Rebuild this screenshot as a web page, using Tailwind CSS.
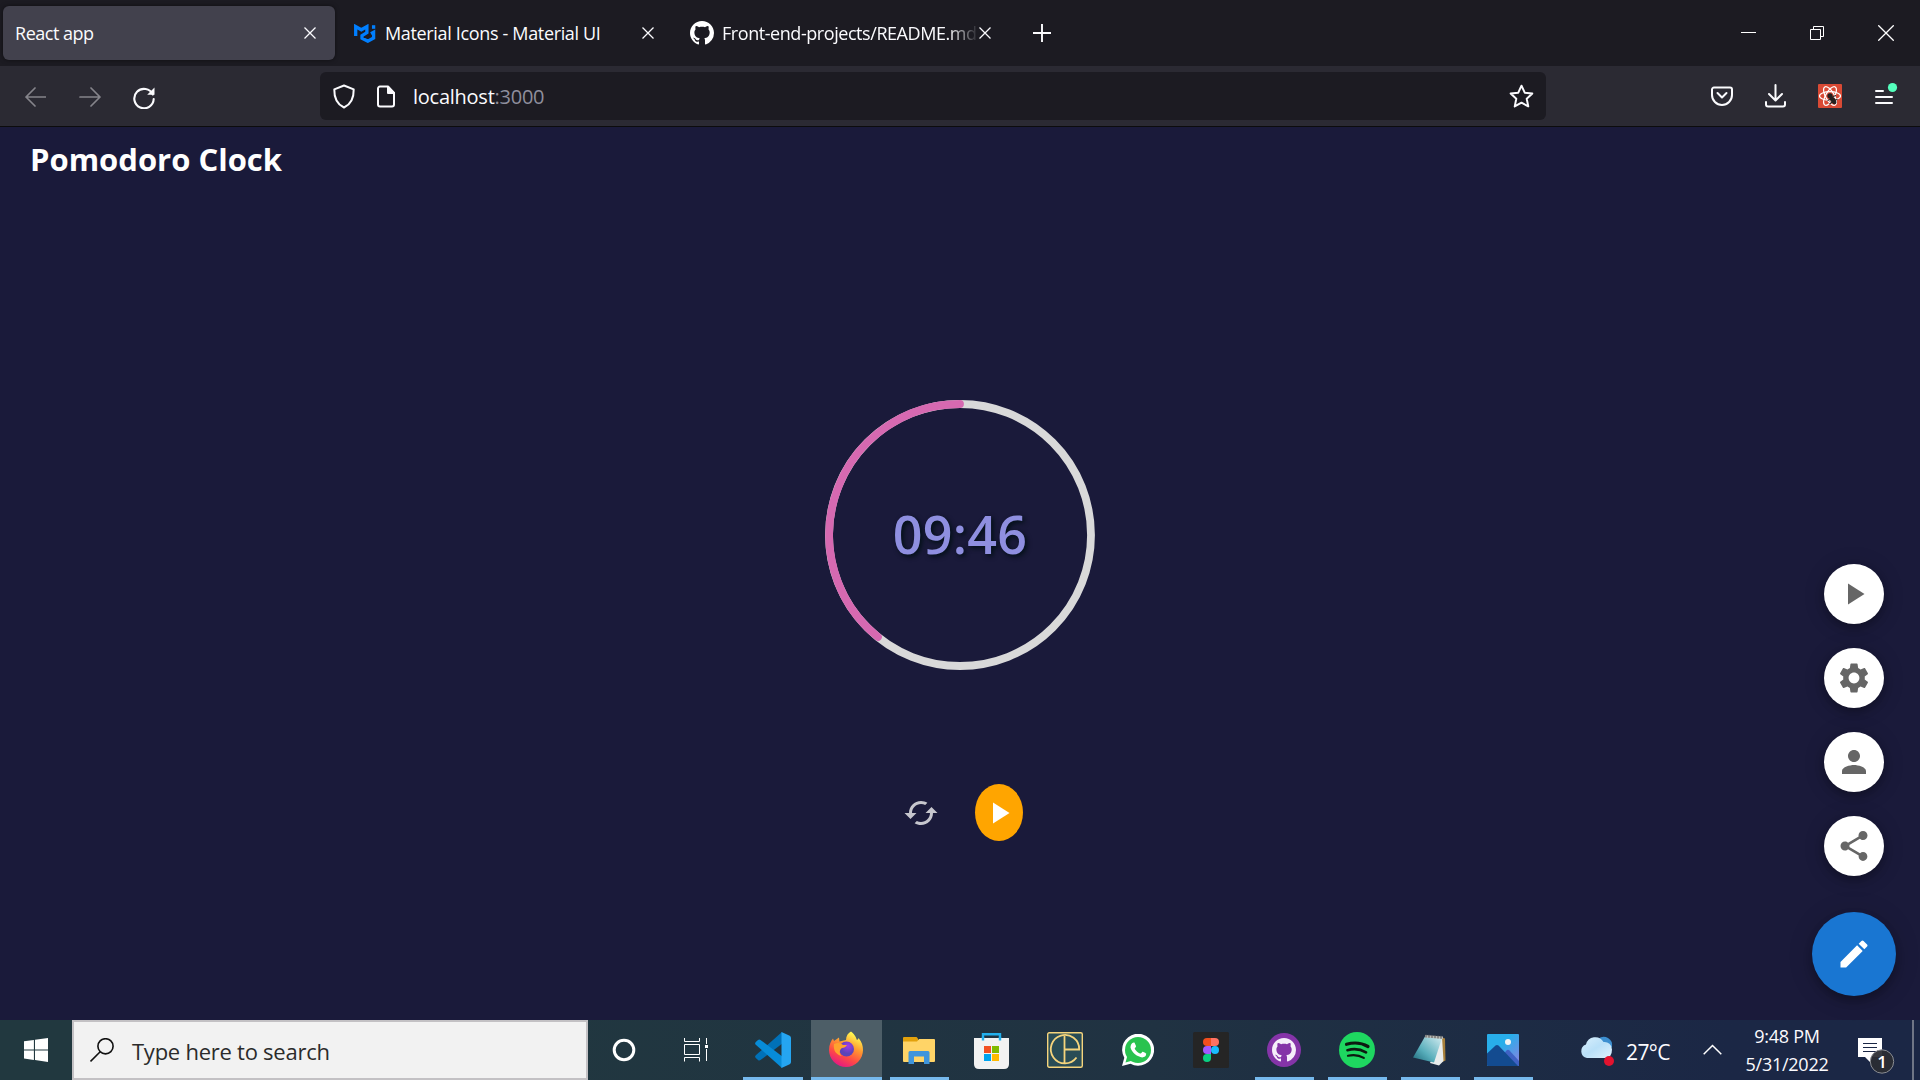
<!DOCTYPE html>
<html lang="en">
<head>
<meta charset="utf-8">
<title>Pomodoro Clock</title>
<script src="https://cdn.jsdelivr.net/npm/@tailwindcss/browser@4"></script>
</head>
<body class="flex h-[1080px] w-[1920px] flex-col overflow-hidden bg-[#1a1a3a] font-['Open_Sans',sans-serif] text-[#fbfbfe]">

<!-- Tab strip -->
<header class="flex h-[66px] shrink-0 items-center bg-[#1c1b22] pl-[3px] text-[18px] leading-6 tracking-[-0.34px]">
  <div class="flex h-[54px] w-[332px] items-center justify-between rounded-[6px] bg-[#42414d] pr-[19px] pl-3 shadow-[0_0_4px_rgba(0,0,0,0.5)]">
    <span class="tracking-[-0.48px]">React app</span>
    <svg class="size-3" viewBox="0 0 12 12" fill="none" stroke="currentColor" stroke-width="1.3"><path d="M.5.5l11 11M11.5.5l-11 11"/></svg>
  </div>
  <div class="ml-[5px] flex h-[54px] w-[332px] items-center pr-[18px] pl-[14px]">
    <svg class="h-[19px] w-[22px]" viewBox="0 0 22 19" fill="none" stroke="#007fff" stroke-width="3.3" stroke-linejoin="miter"><path d="M1.7 12V2.6l5.6 3.2 5.6-3.2v6L8 11.6v2.6l5.8 3 5.8-3.2V8.2l-2.7 1.4"/><path d="M19.6 1.2v3.6"/></svg>
    <span class="ml-[9px] grow whitespace-nowrap">Material Icons - Material UI</span>
    <svg class="size-3" viewBox="0 0 12 12" fill="none" stroke="currentColor" stroke-width="1.3"><path d="M.5.5l11 11M11.5.5l-11 11"/></svg>
  </div>
  <div class="ml-[5px] flex h-[54px] w-[333px] items-center pr-[17px] pl-[13px]">
    <svg class="size-6 shrink-0" viewBox="0 0 16 16" fill="#fff"><path d="M8 0C3.58 0 0 3.58 0 8c0 3.54 2.29 6.53 5.47 7.59.4.07.55-.17.55-.38 0-.19-.01-.82-.01-1.49-2.01.37-2.53-.49-2.69-.94-.09-.23-.48-.94-.82-1.13-.28-.15-.68-.52-.01-.53.63-.01 1.08.58 1.23.82.72 1.21 1.87.87 2.33.66.07-.52.28-.87.51-1.07-1.78-.2-3.64-.89-3.64-3.95 0-.87.31-1.59.82-2.15-.08-.2-.36-1.02.08-2.12 0 0 .67-.21 2.2.82.64-.18 1.32-.27 2-.27s1.36.09 2 .27c1.53-1.04 2.2-.82 2.2-.82.44 1.1.16 1.92.08 2.12.51.56.82 1.27.82 2.15 0 3.07-1.87 3.75-3.65 3.95.29.25.54.73.54 1.48 0 1.07-.01 1.93-.01 2.2 0 .21.15.46.55.38A8.01 8.01 0 0 0 16 8c0-4.42-3.58-8-8-8z"/></svg>
    <span class="ml-2 w-[257px] shrink-0 overflow-hidden mask-r-from-88% mask-r-to-100% whitespace-nowrap tracking-[-0.44px]">Front-end-projects/README.md</span>
    <svg class="size-3 shrink-0" viewBox="0 0 12 12" fill="none" stroke="currentColor" stroke-width="1.3"><path d="M.5.5l11 11M11.5.5l-11 11"/></svg>
  </div>
  <svg class="ml-[23px] size-[18px]" viewBox="0 0 18 18" fill="none" stroke="currentColor" stroke-width="1.9"><path d="M9 0v18M0 9h18"/></svg>
  <div class="ml-auto flex items-center pr-[26px]">
    <svg class="h-[18px] w-[15px]" viewBox="0 0 15 18" fill="#fff"><path d="M0 8h15v1H0z"/></svg>
    <svg class="ml-[54px] size-[14px]" viewBox="0 0 14 14" fill="none" stroke="#fff"><path d="M.5 3.5h10v10H.5zM3.5 3.500V.5h10v10h-3"/></svg>
    <svg class="ml-[54px] size-4" viewBox="0 0 16 16" fill="none" stroke="#fff" stroke-width="1.3"><path d="M.3.3l15.400 15.400M15.700.3L.3 15.700"/></svg>
  </div>
</header>

<!-- Navigation bar -->
<nav class="flex h-[61px] shrink-0 items-center border-b border-[#0c0c0d] bg-[#2b2a33]">
  <svg class="mt-0.5 ml-6 size-[22px] text-[#85848b]" viewBox="0 0 22 22" fill="none" stroke="currentColor" stroke-width="1.7" stroke-linecap="round" stroke-linejoin="round"><path d="M22 11H2M11 2l-9 9 9 9"/></svg>
  <svg class="mt-0.5 ml-[33px] size-[22px] text-[#85848b]" viewBox="0 0 22 22" fill="none" stroke="currentColor" stroke-width="1.7" stroke-linecap="round" stroke-linejoin="round"><path d="M1 11h20M12 2l9 9-9 9"/></svg>
  <svg class="mt-px ml-[31px] size-6" viewBox="0 0 24 24" fill="none" stroke="currentColor" stroke-width="2.1" stroke-linecap="round"><path d="M20.800 9.500A9.700 9.700 0 1 0 21.700 14"/><path d="M22.500 2.500v7.300h-7.300z" fill="currentColor" stroke="none"/></svg>
  <div class="ml-[164px] flex h-12 w-[1226px] items-center rounded-[6px] bg-[#1c1b22] pr-[12px] pl-3">
    <svg class="h-[25px] w-6" viewBox="0 0 24 25" fill="none" stroke="currentColor" stroke-width="2" stroke-linejoin="round"><path d="M12 1.500l9.700 3.900c.2 8.600-2.200 14.500-9.700 18.100C4.500 19.900 2.100 14 2.300 5.400z"/></svg>
    <svg class="ml-5 h-[23px] w-[20px]" viewBox="0 0 20 23" fill="none" stroke="currentColor" stroke-width="2" stroke-linejoin="round"><path d="M12 1.500H4A2 2 0 0 0 2 3.500v16a2 2 0 0 0 2 2h12a2 2 0 0 0 2-2V8z"/><path d="M12 2v6h6z" fill="currentColor"/></svg>
    <span class="ml-[17px] pt-0.5 text-[20px] leading-6 tracking-[-0.25px]">localhost<span class="text-[#8f8f9d]">:3000</span></span>
    <svg class="ml-auto size-[25px]" viewBox="0 0 24 24" fill="none" stroke="currentColor" stroke-width="1.900" stroke-linejoin="round"><path d="M12 1.600l3.100 6.700 7.300.8-5.400 5 1.500 7.400L12 17.900l-6.500 3.600L7 14.100l-5.400-5 7.300-.8z"/></svg>
  </div>
  <div class="mr-[22px] ml-auto flex items-center">
    <svg class="h-5 w-[22px]" viewBox="0 0 22 20" fill="none" stroke="currentColor" stroke-width="2" stroke-linecap="round" stroke-linejoin="round"><path d="M3 1.500h16a2 2 0 0 1 2 2V9A10 10 0 0 1 1 9V3.500a2 2 0 0 1 2-2z"/><path d="M6.500 7l4.500 4.500L15.500 7"/></svg>
    <svg class="ml-8 h-6 w-[21px]" viewBox="0 0 21 24" fill="none" stroke="currentColor" stroke-width="2" stroke-linecap="round" stroke-linejoin="round"><path d="M10.500 1v15M4 10l6.500 6.500L17 10M1 18v2.500a2 2 0 0 0 2 2h15a2 2 0 0 0 2-2V18"/></svg>
    <svg class="ml-8 size-6" viewBox="0 0 24 24"><rect width="24" height="24" rx="1" fill="#d94a35"/><g fill="none" stroke="#fff" stroke-width="1.200"><ellipse cx="12" cy="12" rx="10.500" ry="4.300"/><ellipse cx="12" cy="12" rx="10.500" ry="4.300" transform="rotate(60 12 12)"/><ellipse cx="12" cy="12" rx="10.500" ry="4.300" transform="rotate(120 12 12)"/></g><g fill="#25201f"><circle cx="12" cy="11.800" r="2.600"/><ellipse cx="15" cy="16.200" rx="2.400" ry="4.600" transform="rotate(-35 15 16.200)"/></g><path d="M9.500 16.500l4-1.500M11.500 20l3.500-2.500M15 12.500l3-1M17 16l2.500-.5" stroke="#25201f" stroke-width="1.200"/></svg>
    <svg class="mb-[5px] ml-8 h-[26px] w-[24px]" viewBox="0 0 24 26" fill="none" stroke="currentColor" stroke-width="2" stroke-linecap="round"><path d="M2 10h7M2 16h16M2 22h16"/><circle cx="18.500" cy="6.500" r="4.600" fill="#54ffbd" stroke="none"/></svg>
  </div>
</nav>

<!-- Page -->
<main class="relative flex h-[893px] shrink-0 flex-col items-center">
  <h1 class="self-start pt-[11px] pl-[30px] text-[31px] leading-[42px] font-bold text-white">Pomodoro Clock</h1>
  <div class="mt-[220px] grid size-[270px] place-items-center">
    <svg class="col-start-1 row-start-1 size-[270px]" viewBox="0 0 270 270" fill="none" stroke-width="7.800"><circle cx="135" cy="135" r="131" stroke="#d9d9d9"/><path d="M135 4A131 131 0 0 0 53 237" stroke="#d669b1" stroke-linecap="round" stroke-linejoin="round"/></svg>
    <span class="col-start-1 row-start-1 pb-0.5 text-[52px] leading-[70px] font-semibold tracking-[0.3px] text-[#8f8fe0] text-shadow-[2px_2px_5px_#000f14]">09:46</span>
  </div>
  <div class="mt-[114px] flex items-center gap-9 pl-[6px]">
    <svg class="size-9 text-[#c6c6cd]" viewBox="0 0 24 24" fill="currentColor"><path d="m19 8-4 4h3c0 3.310-2.690 6-6 6-1.010 0-1.970-.25-2.800-.7l-1.460 1.460C8.970 19.540 10.430 20 12 20c4.420 0 8-3.580 8-8h3l-4-4zM6 12c0-3.310 2.690-6 6-6 1.010 0 1.970.25 2.800.7l1.460-1.460C15.030 4.460 13.570 4 12 4c-4.420 0-8 3.580-8 8H1l4 4 4-4H6z"/></svg>
    <div class="flex h-[57px] w-12 items-center justify-center rounded-[50%] bg-[#ffa500]">
      <svg class="size-9" viewBox="0 0 24 24" fill="#fff"><path d="M8 5v14l11-7z"/></svg>
    </div>
  </div>

  <!-- Floating action buttons -->
  <div class="absolute right-6 bottom-6 flex flex-col items-center gap-6 text-[#666]">
    <div class="flex size-[60px] items-center justify-center rounded-full bg-white shadow-[0_4px_8px_rgba(0,0,0,0.25),0_2px_22px_rgba(0,0,0,0.15)]"><svg class="size-9" viewBox="0 0 24 24" fill="currentColor"><path d="M8 5v14l11-7z"/></svg></div>
    <div class="flex size-[60px] items-center justify-center rounded-full bg-white shadow-[0_4px_8px_rgba(0,0,0,0.25),0_2px_22px_rgba(0,0,0,0.15)]"><svg class="size-9" viewBox="0 0 24 24" fill="currentColor"><path d="M19.140 12.940c.04-.3.06-.61.06-.94 0-.32-.02-.64-.07-.94l2.030-1.580c.18-.14.23-.41.12-.61l-1.920-3.320c-.12-.22-.37-.29-.59-.22l-2.390.96c-.5-.38-1.030-.7-1.620-.94l-.36-2.540c-.04-.24-.24-.41-.48-.41h-3.840c-.24 0-.43.17-.47.41l-.36 2.540c-.59.24-1.130.57-1.620.94l-2.390-.96c-.22-.08-.47 0-.59.22L2.740 8.870c-.12.21-.08.47.12.61l2.030 1.580c-.05.3-.09.63-.09.94s.02.64.07.94l-2.030 1.580c-.18.14-.23.41-.12.61l1.920 3.320c.12.22.37.29.59.22l2.390-.96c.5.38 1.030.7 1.620.94l.36 2.540c.05.24.24.41.48.41h3.840c.24 0 .44-.17.47-.41l.36-2.540c.59-.24 1.130-.56 1.620-.94l2.390.96c.22.08.47 0 .59-.22l1.920-3.320c.12-.22.07-.47-.12-.61l-2.010-1.580zM12 15.600c-1.980 0-3.600-1.620-3.600-3.600s1.620-3.600 3.600-3.600 3.600 1.620 3.600 3.600-1.620 3.600-3.600 3.600z"/></svg></div>
    <div class="flex size-[60px] items-center justify-center rounded-full bg-white shadow-[0_4px_8px_rgba(0,0,0,0.25),0_2px_22px_rgba(0,0,0,0.15)]"><svg class="size-9" viewBox="0 0 24 24" fill="currentColor"><path d="M12 12c2.210 0 4-1.790 4-4s-1.790-4-4-4-4 1.790-4 4 1.790 4 4 4zm0 2c-2.670 0-8 1.340-8 4v2h16v-2c0-2.660-5.330-4-8-4z"/></svg></div>
    <div class="flex size-[60px] items-center justify-center rounded-full bg-white shadow-[0_4px_8px_rgba(0,0,0,0.25),0_2px_22px_rgba(0,0,0,0.15)]"><svg class="size-9" viewBox="0 0 24 24" fill="currentColor"><path d="M18 16.080c-.76 0-1.440.3-1.960.77L8.910 12.700c.05-.23.09-.46.09-.7s-.04-.47-.09-.7l7.050-4.110c.54.5 1.250.81 2.040.81 1.660 0 3-1.340 3-3s-1.340-3-3-3-3 1.340-3 3c0 .24.04.47.09.7L8.040 9.810C7.500 9.310 6.790 9 6 9c-1.660 0-3 1.340-3 3s1.340 3 3 3c.79 0 1.500-.31 2.040-.81l7.120 4.160c-.05.21-.08.43-.08.65 0 1.610 1.310 2.920 2.920 2.920 1.610 0 2.920-1.310 2.920-2.920s-1.310-2.920-2.920-2.920z"/></svg></div>
    <div class="mt-3 flex size-[84px] items-center justify-center rounded-full bg-[#1976d2] shadow-[0_5px_9px_rgba(0,0,0,0.25),0_2px_26px_rgba(0,0,0,0.15)]"><svg class="size-9" viewBox="0 0 24 24" fill="#fff"><path d="M3 17.250V21h3.750L17.810 9.940l-3.750-3.750L3 17.250zM20.710 7.040c.39-.39.39-1.020 0-1.410l-2.340-2.340a.9959.9959 0 0 0-1.410 0l-1.830 1.830 3.750 3.750 1.830-1.830z"/></svg></div>
  </div>
</main>

<!-- Taskbar -->
<footer class="flex h-[60px] shrink-0 bg-linear-to-r from-[#21383f] from-20% via-[#203242] via-60% to-[#1b2745] to-90%">
  <div class="flex w-[72px] items-center justify-center">
    <svg class="size-6" viewBox="0 0 24 24" fill="#fff"><path d="M0 3.300L9.900 2v9.500H0zM11 1.800L24 0v11.500H11zM0 12.500h9.900v9.400L0 20.600zM11 12.500h13V24l-13-1.900z"/></svg>
  </div>
  <div class="flex w-[516px] items-center border-2 border-[#c3c1c4] bg-[#f2f2f2] pl-4 text-[#2b2b2b]">
    <svg class="mb-px size-6" viewBox="0 0 24 24" fill="none" stroke="#111" stroke-width="1.600"><circle cx="15.500" cy="8.300" r="7.600"/><path d="M10.200 13.700L.5 23.400"/></svg>
    <span class="mt-0.5 ml-[18px] text-[22px] leading-8 tracking-[-0.25px]">Type here to search</span>
  </div>
  <div class="flex w-[72px] items-center justify-center"><svg class="size-6" viewBox="0 0 24 24" fill="none" stroke="#fff" stroke-width="3"><circle cx="12" cy="12" r="9.800"/></svg></div>
  <div class="mr-[5px] flex w-[72px] items-center justify-center"><svg class="mb-px size-6" viewBox="0 0 24 24" fill="none" stroke="#fff"><path d="M.5 0v3.500h15V0M.5 6.500h15v10H.5zM.5 23.500v-4h15v4M22.500 0v6M22.500 11v12"/><path d="M21 7h3v3h-3z" fill="#fff" stroke="none"/></svg></div>

  <!-- Visual Studio Code -->
  <div class="flex w-[73px] items-center justify-center border-b-[3px] border-transparent bg-[linear-gradient(#76b9ed,#76b9ed)] bg-[length:60px_3px] bg-[position:6px_100%] bg-origin-border bg-no-repeat pr-0.5">
    <svg class="mt-[3px] size-9" viewBox="0 0 36 36"><path d="M27 0L.8 23.200a2 2 0 0 0 0 2.800l2.200 2a2 2 0 0 0 2.500.1L28 11z" fill="#0071b8"/><path d="M27 36L.8 12.800a2 2 0 0 1 0-2.800L3 8a2 2 0 0 1 2.500-.1L28 25z" fill="#078cd8"/><path d="M26.500 0L34.700 3.800Q36 4.500 36 6v24q0 1.500-1.300 2.200L26.500 36z" fill="#25a5f1"/></svg>
  </div>
  <!-- Firefox -->
  <div class="ml-px flex w-[71px] items-center justify-center border-b-[3px] border-[#76b9ed] bg-[#4d5e67] pr-0.5">
    <svg class="h-[36px] w-[34px]" viewBox="0 0 34 36"><defs><linearGradient id="fx" x1=".8" y1="0" x2=".3" y2="1"><stop offset=".1" stop-color="#fff44f"/><stop offset=".4" stop-color="#ff9a30"/><stop offset=".7" stop-color="#ff4a45"/><stop offset="1" stop-color="#e31587"/></linearGradient><radialGradient id="fp" cx=".6" cy=".3"><stop offset="0" stop-color="#a23ce8"/><stop offset="1" stop-color="#5a44b8"/></radialGradient></defs><path d="M22 .5c4.500 3.500 5 6.500 6 8.500 1-.5 1.200-1 1.500-2C33 11 34 15 34 19a17 17 0 0 1-34 0C0 13.500 2 10 4 7.500L5 10l5-3.500.5 4L17 9c0-4 2-7 5-8.500z" fill="url(#fx)"/><circle cx="17.500" cy="18" r="7.500" fill="url(#fp)"/><path d="M5 13c4-2 7-1 9 1h4c-1 2-3 3-5 3-3 2-3 6 0 8-6-1-9-6-8-12z" fill="#ffa22e"/></svg>
  </div>
  <!-- File Explorer -->
  <div class="ml-px flex w-[73px] items-center justify-center border-b-[3px] border-transparent bg-[linear-gradient(#76b9ed,#76b9ed)] bg-[length:59px_3px] bg-[position:7px_100%] bg-origin-border bg-no-repeat pr-0.5">
    <svg class="mt-[3px] h-[27px] w-8" viewBox="0 0 32 27"><path d="M0 1q0-1 1-1h12.500l1.500 1.500V6H0z" fill="#e2a10c"/><path d="M0 4.500h14L16 2h15q1 0 1 1v21q0 1-1 1H1q-1 0-1-1z" fill="#ffd467"/><path d="M5.500 27V15.500q0-1.500 1.500-1.500h18q1.500 0 1.500 1.500V27H21v-7.500H11V27z" fill="#3f95dc"/></svg>
  </div>
  <!-- Microsoft Store -->
  <div class="flex w-[73px] items-center justify-center pr-0.5">
    <svg class="mb-[-1px] h-9 w-[35px]" viewBox="0 0 35 36"><path d="M9 7V1.200h17V7" fill="none" stroke="#22b0ee" stroke-width="2.400"/><path d="M0 5h35v26q0 5-5 5H5q-5 0-5-5z" fill="#f2f2f2"/><path d="M7.800 4h2.400v3.500H7.800zM24.800 4h2.400v3.500h-2.400z" fill="#22b0ee"/><path d="M10 13h7v7h-7z" fill="#f25022"/><path d="M18 13h7v7h-7z" fill="#7fba00"/><path d="M10 21h7v7h-7z" fill="#00a4ef"/><path d="M18 21h7v7h-7z" fill="#ffb900"/></svg>
  </div>
  <!-- CE monogram -->
  <div class="flex w-[73px] items-center justify-center pr-0.5">
    <svg class="size-9" viewBox="0 0 36 36" fill="none" stroke="#f5d47c"><rect x=".7" y=".7" width="34.600" height="34.600" rx="1.500" fill="#294c56" stroke-width="1.400"/><path d="M29.500 25.500A14.200 14.200 0 1 1 32.200 17.500H17.500M17.500 4v28" stroke-width="1.800"/></svg>
  </div>
  <!-- WhatsApp -->
  <div class="flex w-[73px] items-center justify-center pr-0.5">
    <svg class="size-8" viewBox="0 0 32 32"><path d="M0 32l2.300-8.200A16 16 0 1 1 8.500 29.800z" fill="#fff"/><circle cx="16" cy="16" r="13" fill="#29c34f"/><path d="M3.500 28.500l1.700-6 4.500 4.300z" fill="#29c34f"/><path d="M11.700 8.500c.5 0 .8 0 1.100.8l1.200 2.800c.2.500-.1 1-1.300 2.300-.3.400 2.500 4.200 5.800 5.200.7.200 1.500-1.600 2.100-1.800.6 0 3.500 1.500 3.600 1.800.2 2.600-1.800 3.800-4 3.900-4.500-.4-10.700-5-11.700-9.900-.2-2.200 1.200-4.800 3.200-5.100z" fill="#fff"/></svg>
  </div>
  <!-- Figma -->
  <div class="flex w-[73px] items-center justify-center pr-0.5">
    <svg class="size-9" viewBox="0 0 36 36"><rect width="36" height="36" rx="1.500" fill="#252525"/><path d="M18 6h-4a4 4 0 0 0 0 8h4z" fill="#f24e1e"/><path d="M18 6h4a4 4 0 0 1 0 8h-4z" fill="#ff7262"/><path d="M18 14h-4a4 4 0 0 0 0 8h4z" fill="#a259ff"/><circle cx="22" cy="18" r="4" fill="#1abcfe"/><path d="M18 22h-4a4 4 0 1 0 4 4z" fill="#0acf83"/></svg>
  </div>
  <!-- GitHub Desktop -->
  <div class="flex w-[73px] items-center justify-center border-b-[3px] border-transparent bg-[linear-gradient(#76b9ed,#76b9ed)] bg-[length:59px_3px] bg-[position:7px_100%] bg-origin-border bg-no-repeat pr-0.5">
    <svg class="mt-[3px] size-[34px]" viewBox="0 0 34 34"><circle cx="17" cy="17" r="17" fill="#8534a8"/><path transform="translate(5 5) scale(1.500)" fill="#f5eefa" d="M8 0C3.580 0 0 3.580 0 8c0 3.540 2.290 6.530 5.470 7.590.4.07.55-.17.55-.38 0-.19-.01-.82-.01-1.490-2.010.37-2.530-.49-2.690-.94-.09-.23-.48-.94-.82-1.130-.28-.15-.68-.52-.01-.53.63-.01 1.080.58 1.230.82.72 1.210 1.870.87 2.330.66.07-.52.28-.87.51-1.070-1.780-.2-3.640-.89-3.640-3.950 0-.87.31-1.590.82-2.150-.08-.2-.36-1.020.08-2.120 0 0 .67-.21 2.200.82.64-.18 1.320-.27 2-.27s1.360.09 2 .27c1.530-1.040 2.200-.82 2.200-.82.44 1.100.16 1.920.08 2.120.51.56.82 1.270.82 2.150 0 3.070-1.870 3.750-3.650 3.950.29.25.54.73.54 1.480 0 1.070-.01 1.930-.01 2.200 0 .21.15.46.55.38A8.010 8.010 0 0 0 16 8c0-4.420-3.580-8-8-8z"/></svg>
  </div>
  <!-- Spotify -->
  <div class="flex w-[73px] items-center justify-center border-b-[3px] border-transparent bg-[linear-gradient(#76b9ed,#76b9ed)] bg-[length:59px_3px] bg-[position:7px_100%] bg-origin-border bg-no-repeat pr-0.5">
    <svg class="mt-[3px] size-9" viewBox="0 0 36 36" fill="none" stroke="#0d1a10" stroke-linecap="round"><circle cx="18" cy="18" r="18" fill="#1ed760" stroke="none"/><path d="M7.500 12.300c7-2 15.500-1.300 21.500 2.200" stroke-width="3.200"/><path d="M8.500 18.200c6.300-1.800 13-1 18.500 2.200" stroke-width="2.700"/><path d="M9 23.700c5.500-1.300 11-.7 15.800 2.200" stroke-width="2.200"/></svg>
  </div>
  <!-- Notepad -->
  <div class="flex w-[73px] items-center justify-center border-b-[3px] border-transparent bg-[linear-gradient(#76b9ed,#76b9ed)] bg-[length:59px_3px] bg-[position:7px_100%] bg-origin-border bg-no-repeat pr-0.5">
    <svg class="mt-[3px] h-8 w-[34px]" viewBox="0 0 34 32"><defs><linearGradient id="np" x1="1" y1="0" x2="0" y2="1"><stop offset="0" stop-color="#d5edf2"/><stop offset=".6" stop-color="#58aebb"/><stop offset="1" stop-color="#1c6678"/></linearGradient></defs><path d="M28 3l4 1.500.5 22L27 29z" fill="#a8803a"/><path d="M29 3l1.500 24L26 31.500 17 29z" fill="#e9eded"/><path d="M12 2.500L29 4l-8 24.500L0 23.500z" fill="url(#np)"/><path d="M12 1l18 1.500V5L12 3.500z" fill="#b9b9b4"/><path d="M13 .5v3M16 .7v3M19 1v3M22 1.200v3M25 1.500v3M28 1.700v3" stroke="#555"/></svg>
  </div>
  <!-- Photos -->
  <div class="flex w-[73px] items-center justify-center border-b-[3px] border-transparent bg-[linear-gradient(#76b9ed,#76b9ed)] bg-[length:59px_3px] bg-[position:7px_100%] bg-origin-border bg-no-repeat pr-0.5">
    <svg class="mt-[3px] size-8" viewBox="0 0 32 32"><defs><linearGradient id="ph" x1="0" y1="0" x2="1" y2="1"><stop offset=".4" stop-color="#28aeea"/><stop offset="1" stop-color="#8f7fe0"/></linearGradient></defs><rect width="32" height="32" rx="1" fill="url(#ph)"/><path d="M13 24l6.500-7.500q1.500-1.500 3 0L32 27v5H18z" fill="#3f62c4"/><path d="M0 19.500L8.500 11.500q1.500-1 3 0L31 32H1q-1 0-1-1z" fill="#134b90"/><circle cx="21" cy="8" r="3" fill="#f4f4f4"/></svg>
  </div>

  <!-- System tray -->
  <div class="flex grow items-center">
    <svg class="mt-0.5 ml-[40px] h-8 w-[35px]" viewBox="0 0 35 32"><defs><linearGradient id="cl" x1="0" y1="0" x2="1" y2="1"><stop offset="0" stop-color="#d9effc"/><stop offset=".5" stop-color="#b9e0f8"/><stop offset="1" stop-color="#dff2fd"/></linearGradient></defs><path d="M18 4q5-4 10-1 5 3 4 9l-6 6z" fill="#3d8fd0"/><path d="M7 23a7 7 0 0 1-1-13.500A9.500 9.500 0 0 1 23.500 7 7.500 7.500 0 0 1 32 14.500Q32 23 25 23z" fill="url(#cl)"/><circle cx="29" cy="26" r="5" fill="#e3132f"/></svg>
    <span class="mt-1 ml-[11px] w-12 text-[21px] leading-7 tracking-[-0.6px]">27°C</span>
    <svg class="mb-0.5 ml-[29px] h-[11px] w-[19px]" viewBox="0 0 19 11" fill="none" stroke="#fff" stroke-width="1.500"><path d="M.7 10.300L9.500 1.500l8.800 8.800"/></svg>
    <div class="ml-[23px] flex w-[84px] flex-col items-center text-[18px] leading-[28px] tracking-[-0.25px] whitespace-nowrap">
      <span>9:48 PM</span><span>5/31/2022</span>
    </div>
    <svg class="mt-[10px] ml-[29px] h-[40px] w-[38px]" viewBox="0 0 38 40"><path d="M0 3h24v19H13v6l-6-6H0z" fill="#fff"/><path d="M5 8.500h14M5 12.500h14M5 16.500h14" stroke="#1b2745" stroke-width="1.200"/><circle cx="24" cy="26.500" r="11.700" fill="#2a2d33" fill-opacity=".94" stroke="#8a8d93"/><text x="24" y="32.500" text-anchor="middle" fill="#fff" font-size="17" font-weight="600">1</text></svg>
    <div class="mr-1.5 ml-auto h-[60px] w-0.5 bg-[#6f7686]"></div>
  </div>
</footer>
</body>
</html>
